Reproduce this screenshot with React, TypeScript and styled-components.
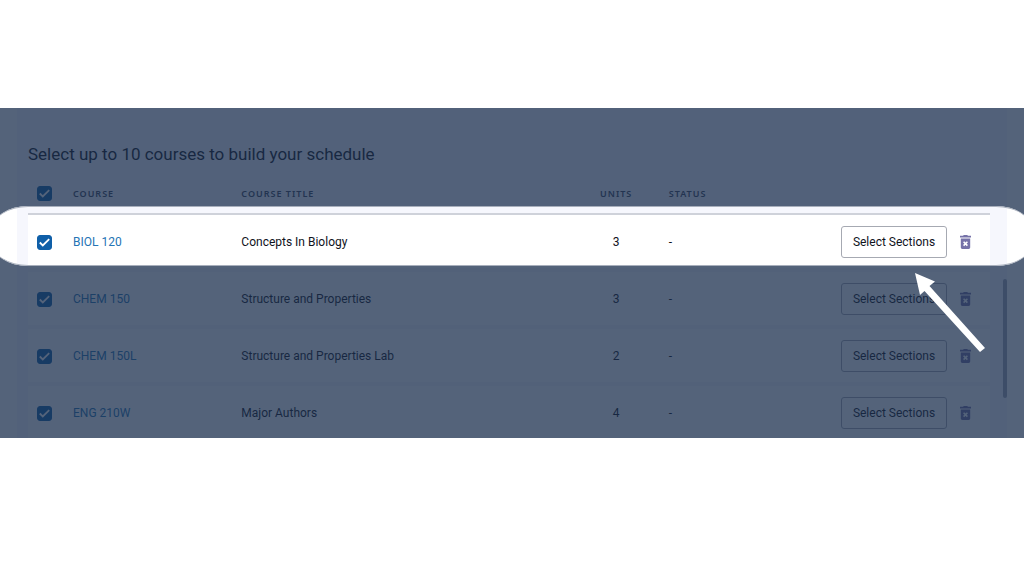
import React from "react";
import styled, { createGlobalStyle } from "styled-components";

const Global = createGlobalStyle`
  *, *::before, *::after { box-sizing: border-box; }
  body { margin: 0; background: #ffffff; font-family: "Roboto", "Liberation Sans", sans-serif; color: #10131c; }
`;

const Page = styled.main`
  padding: 108px 0 0;
`;

const Stage = styled.section`
  position: relative;
  overflow: hidden;
  padding: 0 17px;
`;

const Panel = styled.div`
  display: flex;
  flex-direction: column;
  padding: 36px 17px 0 11px;
  background: #f6f7fd;
`;

const Title = styled.h1`
  margin: 0;
  font-size: 17px;
  font-weight: 400;
  line-height: 20px;
`;

const Scroller = styled.div`
  max-height: 274px;
  overflow: hidden;
`;

const CourseTable = styled.table`
  width: 100%;
  table-layout: fixed;
  border-collapse: separate;
  border-spacing: 0;
  font-size: 12px;
`;

const SelectColumn = styled.col`
  width: 45px;
`;

const CodeColumn = styled.col`
  width: 17.5%;
`;

const UnitsColumn = styled.col`
  width: 33px;
`;

const GapColumn = styled.col`
  width: 36px;
`;

const StatusColumn = styled.col`
  width: 33.4%;
`;

const HeadCell = styled.th<{ $center?: boolean }>`
  height: 51px;
  padding: 10px 0 0;
  border-bottom: 2px solid #cfd2da;
  color: #3c465c;
  font-family: "Noto Sans", sans-serif;
  font-size: 9px;
  font-weight: 600;
  letter-spacing: 1px;
  text-align: ${(p) => (p.$center ? "center" : "left")};
`;

const Row = styled.tr`
  background: #ffffff;
`;

const Cell = styled.td<{ $center?: boolean }>`
  height: 57px;
  padding: 1px 0 0;
  border-bottom: 4px solid #f6f7fb;
  text-align: ${(p) => (p.$center ? "center" : "left")};
`;

const CourseLink = styled.a`
  color: #2474b4;
  text-decoration: none;
`;

const TickBox = styled.label`
  display: inline-grid;
  width: 15px;
  height: 15px;
  margin-left: 9px;
  vertical-align: middle;

  > * {
    grid-area: 1 / 1;
  }
`;

const TickInput = styled.input`
  appearance: none;
  width: 15px;
  height: 15px;
  margin: 0;
  border: 1px solid #0f5fa8;
  border-radius: 3px;

  &:checked {
    background: #0f5fa8;
  }
`;

const Actions = styled.div`
  display: flex;
  align-items: center;
  gap: 13px;
  padding-right: 19px;
`;

const Status = styled.span`
  flex: 1;
`;

const SelectButton = styled.button`
  width: 106px;
  height: 32px;
  padding: 0;
  border: 1px solid #a6a9b2;
  border-radius: 3px;
  background: #ffffff;
  color: inherit;
  font: inherit;
`;

const DeleteButton = styled.button`
  display: flex;
  padding: 0;
  border: 0;
  background: none;
  color: #7672a8;
`;

const Spotlight = styled.div`
  position: absolute;
  top: 98px;
  left: -8px;
  right: -8px;
  height: 60px;
  border: 1px solid #a8afbc;
  border-width: 1px 0;
  border-radius: 36px / 24px;
  box-shadow: 0 0 0 2000px rgba(27, 47, 78, 0.75);
  pointer-events: none;
`;

const ScrollThumb = styled.div`
  position: absolute;
  top: 171px;
  right: 17px;
  width: 4px;
  height: 119px;
  border-radius: 2px;
  background: #a3a9b8;
`;

const Arrow = styled.svg`
  position: absolute;
  top: 165px;
  right: 38px;
  width: 71px;
  height: 80px;
  pointer-events: none;
`;

function Tick({ label }: { label: string }) {
  return (
    <TickBox>
      <TickInput type="checkbox" defaultChecked aria-label={label} />
      <svg width="15" height="15" viewBox="0 0 15 15" fill="none" pointerEvents="none" aria-hidden="true">
        <path d="M2.8 7.5 5.8 10.5 12.2 4.2" stroke="#fff" strokeWidth="1.8" />
      </svg>
    </TickBox>
  );
}

function TrashIcon() {
  return (
    <svg width="11" height="14" viewBox="0 0 11 14" aria-hidden="true">
      <path d="M0 .8h3L3.8 0h3.4L8 .8h3v1.7H0z" fill="currentColor" />
      <path d="M.8 3.4h9.4v9A1.5 1.5 0 0 1 8.7 14H2.3A1.5 1.5 0 0 1 .8 12.4z" fill="currentColor" />
      <path d="m3.6 6.8 3.8 3.8m0-3.8-3.8 3.8" stroke="#fff" strokeWidth="1.6" />
    </svg>
  );
}

const courses = [
  { code: "BIOL 120", title: "Concepts In Biology", units: 3 },
  { code: "CHEM 150", title: "Structure and Properties", units: 3 },
  { code: "CHEM 150L", title: "Structure and Properties Lab", units: 2 },
  { code: "ENG 210W", title: "Major Authors", units: 4 },
];

export default function App() {
  return (
    <Page>
      <Global />
      <Stage>
        <Panel>
          <Title>Select up to 10 courses to build your schedule</Title>
          <Scroller>
            <CourseTable>
              <colgroup>
                <SelectColumn />
                <CodeColumn />
                <col />
                <UnitsColumn />
                <GapColumn />
                <StatusColumn />
              </colgroup>
              <thead>
                <tr>
                  <HeadCell><Tick label="Select all courses" /></HeadCell>
                  <HeadCell>COURSE</HeadCell>
                  <HeadCell>COURSE TITLE</HeadCell>
                  <HeadCell $center>UNITS</HeadCell>
                  <HeadCell />
                  <HeadCell>STATUS</HeadCell>
                </tr>
              </thead>
              <tbody>
                {courses.map((c) => (
                  <Row key={c.code}>
                    <Cell><Tick label={`Include ${c.code}`} /></Cell>
                    <Cell><CourseLink href="#">{c.code}</CourseLink></Cell>
                    <Cell>{c.title}</Cell>
                    <Cell $center>{c.units}</Cell>
                    <Cell />
                    <Cell>
                      <Actions>
                        <Status>-</Status>
                        <SelectButton type="button">Select Sections</SelectButton>
                        <DeleteButton type="button" aria-label={`Remove ${c.code}`}><TrashIcon /></DeleteButton>
                      </Actions>
                    </Cell>
                  </Row>
                ))}
              </tbody>
            </CourseTable>
          </Scroller>
        </Panel>
        <ScrollThumb />
        <Spotlight />
        <Arrow viewBox="0 0 71 80" aria-hidden="true">
          <path d="M0 0 20 8.5 14.5 13 70 75 65 79 9.5 18 5 22z" fill="#fff" />
        </Arrow>
      </Stage>
    </Page>
  );
}
